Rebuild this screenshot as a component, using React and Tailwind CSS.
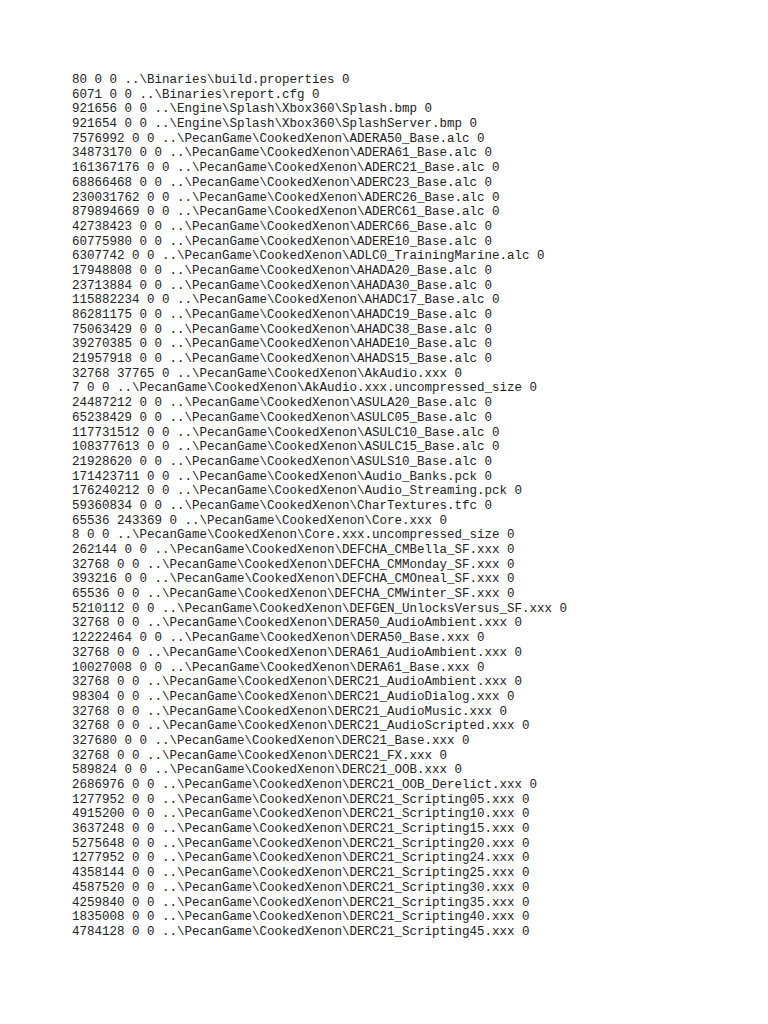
const P = '..\\PecanGame\\CookedXenon\\';

const LINES = [
  '80 0 0 ..\\Binaries\\build.properties 0',
  '6071 0 0 ..\\Binaries\\report.cfg 0',
  '921656 0 0 ..\\Engine\\Splash\\Xbox360\\Splash.bmp 0',
  '921654 0 0 ..\\Engine\\Splash\\Xbox360\\SplashServer.bmp 0',
  `7576992 0 0 ${P}ADERA50_Base.alc 0`,
  `34873170 0 0 ${P}ADERA61_Base.alc 0`,
  `161367176 0 0 ${P}ADERC21_Base.alc 0`,
  `68866468 0 0 ${P}ADERC23_Base.alc 0`,
  `230031762 0 0 ${P}ADERC26_Base.alc 0`,
  `879894669 0 0 ${P}ADERC61_Base.alc 0`,
  `42738423 0 0 ${P}ADERC66_Base.alc 0`,
  `60775980 0 0 ${P}ADERE10_Base.alc 0`,
  `6307742 0 0 ${P}ADLC0_TrainingMarine.alc 0`,
  `17948808 0 0 ${P}AHADA20_Base.alc 0`,
  `23713884 0 0 ${P}AHADA30_Base.alc 0`,
  `115882234 0 0 ${P}AHADC17_Base.alc 0`,
  `86281175 0 0 ${P}AHADC19_Base.alc 0`,
  `75063429 0 0 ${P}AHADC38_Base.alc 0`,
  `39270385 0 0 ${P}AHADE10_Base.alc 0`,
  `21957918 0 0 ${P}AHADS15_Base.alc 0`,
  `32768 37765 0 ${P}AkAudio.xxx 0`,
  `7 0 0 ${P}AkAudio.xxx.uncompressed_size 0`,
  `24487212 0 0 ${P}ASULA20_Base.alc 0`,
  `65238429 0 0 ${P}ASULC05_Base.alc 0`,
  `117731512 0 0 ${P}ASULC10_Base.alc 0`,
  `108377613 0 0 ${P}ASULC15_Base.alc 0`,
  `21928620 0 0 ${P}ASULS10_Base.alc 0`,
  `171423711 0 0 ${P}Audio_Banks.pck 0`,
  `176240212 0 0 ${P}Audio_Streaming.pck 0`,
  `59360834 0 0 ${P}CharTextures.tfc 0`,
  `65536 243369 0 ${P}Core.xxx 0`,
  `8 0 0 ${P}Core.xxx.uncompressed_size 0`,
  `262144 0 0 ${P}DEFCHA_CMBella_SF.xxx 0`,
  `32768 0 0 ${P}DEFCHA_CMMonday_SF.xxx 0`,
  `393216 0 0 ${P}DEFCHA_CMOneal_SF.xxx 0`,
  `65536 0 0 ${P}DEFCHA_CMWinter_SF.xxx 0`,
  `5210112 0 0 ${P}DEFGEN_UnlocksVersus_SF.xxx 0`,
  `32768 0 0 ${P}DERA50_AudioAmbient.xxx 0`,
  `12222464 0 0 ${P}DERA50_Base.xxx 0`,
  `32768 0 0 ${P}DERA61_AudioAmbient.xxx 0`,
  `10027008 0 0 ${P}DERA61_Base.xxx 0`,
  `32768 0 0 ${P}DERC21_AudioAmbient.xxx 0`,
  `98304 0 0 ${P}DERC21_AudioDialog.xxx 0`,
  `32768 0 0 ${P}DERC21_AudioMusic.xxx 0`,
  `32768 0 0 ${P}DERC21_AudioScripted.xxx 0`,
  `327680 0 0 ${P}DERC21_Base.xxx 0`,
  `32768 0 0 ${P}DERC21_FX.xxx 0`,
  `589824 0 0 ${P}DERC21_OOB.xxx 0`,
  `2686976 0 0 ${P}DERC21_OOB_Derelict.xxx 0`,
  `1277952 0 0 ${P}DERC21_Scripting05.xxx 0`,
  `4915200 0 0 ${P}DERC21_Scripting10.xxx 0`,
  `3637248 0 0 ${P}DERC21_Scripting15.xxx 0`,
  `5275648 0 0 ${P}DERC21_Scripting20.xxx 0`,
  `1277952 0 0 ${P}DERC21_Scripting24.xxx 0`,
  `4358144 0 0 ${P}DERC21_Scripting25.xxx 0`,
  `4587520 0 0 ${P}DERC21_Scripting30.xxx 0`,
  `4259840 0 0 ${P}DERC21_Scripting35.xxx 0`,
  `1835008 0 0 ${P}DERC21_Scripting40.xxx 0`,
  `4784128 0 0 ${P}DERC21_Scripting45.xxx 0`,
];

export default function App() {
  return (
    <div className="w-[768px] h-[1024px] bg-white overflow-hidden">
      <div className="pt-[73px] pl-[72px] font-['Liberation_Mono',monospace] text-[12.5px] leading-[14.69px] text-[#222] whitespace-pre">
        {LINES.map((l, i) => (
          <div key={i}>{l}</div>
        ))}
      </div>
    </div>
  );
}
